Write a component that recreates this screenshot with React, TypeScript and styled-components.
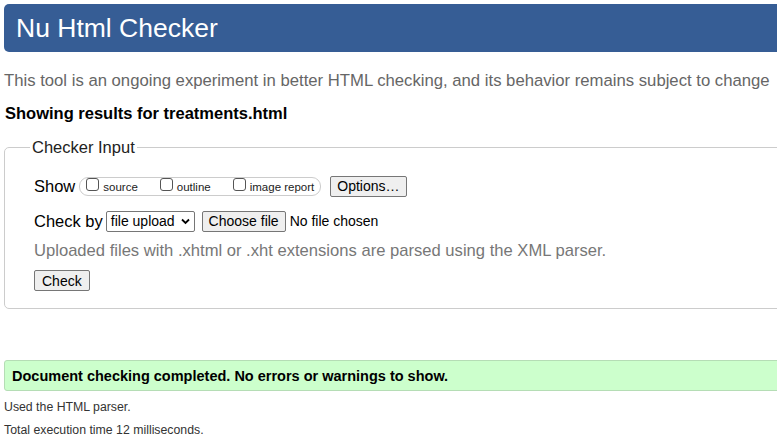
import styled, { createGlobalStyle } from 'styled-components';

const GlobalStyle = createGlobalStyle`
  html, body {
    margin: 0;
    padding: 0;
    background: #fff;
  }
  body {
    font-family: 'Liberation Sans', Arial, sans-serif;
    color: #000;
    width: 900px;
  }
`;

const StyledPage = styled.div`
  padding: 4px;
`;
const StyledHeader = styled.h1`
  margin: 0;
  height: 48px;
  display: flex;
  align-items: center;
  padding: 0 12px;
  background-color: #365d95;
  border-radius: 5px;
  color: #fff;
  font-size: 26.5px;
  font-weight: normal;
`;
const StyledIntro = styled.p`
  margin: 19px 0 0 0;
  color: #666;
  font-size: 16.7px;
  line-height: 20px;
`;
const StyledShowing = styled.h2`
  margin: 13px 0 0 1px;
  font-size: 16.5px;
  line-height: 18px;
  font-weight: bold;
`;
const StyledFieldset = styled.fieldset`
  margin: 16px 0 0 0;
  padding: 17px 0 16px 29px;
  border: 1px solid #ccc;
  border-radius: 5px;
  height: 171px;
  box-sizing: border-box;
`;
const StyledLegend = styled.legend`
  margin-left: -4px;
  padding: 0 2px;
  font-size: 16.5px;
  color: #222;
`;
const StyledRow = styled.div<{ $gap: number; $after: number }>`
  display: flex;
  align-items: center;
  gap: ${({ $gap }) => $gap}px;
  height: 24px;
  margin-bottom: ${({ $after }) => $after}px;
  font-size: 16.5px;
`;
const StyledPill = styled.span`
  display: inline-flex;
  align-items: center;
  gap: 22px;
  height: 17px;
  padding: 0 6px 0 6px;
  border: 1px solid #ccc;
  border-radius: 9px;
  margin-left: -2px;
  margin-right: 3px;
`;
const StyledCheckLabel = styled.label`
  display: inline-flex;
  align-items: center;
  font-size: 11.5px;
  color: #222;
  gap: 4px;
  padding-top: 2px;
`;
const StyledBox = styled.span`
  width: 13px;
  height: 13px;
  border: 1px solid #555;
  border-radius: 3px;
  box-sizing: border-box;
  margin-top: -6px;
`;
const StyledButton = styled.button<{ $pad?: number }>`
  font-family: inherit;
  font-size: 14px;
  color: #000;
  background: #efefef;
  border: 1px solid #767676;
  border-radius: 2px;
  padding: 0 ${({ $pad }) => $pad ?? 7}px;
  height: 21px;
`;
const StyledSelect = styled.span`
  display: inline-flex;
  align-items: center;
  gap: 6px;
  height: 21px;
  box-sizing: border-box;
  padding: 0 4px 0 4px;
  border: 1px solid #767676;
  border-radius: 2px;
  font-size: 14px;
  margin-left: -4px;
`;
const StyledNoFile = styled.span`
  font-size: 14px;
  margin-left: -3px;
`;
const StyledHint = styled.p`
  margin: 0 0 10px 0;
  color: #777;
  font-size: 16.6px;
  line-height: 19px;
`;
const StyledSuccess = styled.p`
  margin: 51px 0 0 0;
  height: 31px;
  display: flex;
  align-items: center;
  padding: 0 7px;
  background-color: #ccffcc;
  border: 1px solid #b5ddb5;
  border-radius: 3px;
  box-sizing: border-box;
  font-size: 14.5px;
  font-weight: bold;
`;
const StyledDetail = styled.p`
  margin: 9px 0 0 0;
  font-size: 12.3px;
  line-height: 14px;
  color: #333;
`;

function Checkbox({ label }: { label: string }) {
  return (
    <StyledCheckLabel>
      <StyledBox />
      {label}
    </StyledCheckLabel>
  );
}

export default function App() {
  return (
    <>
      <GlobalStyle />
      <StyledPage>
        <StyledHeader>Nu Html Checker</StyledHeader>
        <StyledIntro>
          This tool is an ongoing experiment in better HTML checking, and its behavior remains subject to change
        </StyledIntro>
        <StyledShowing>Showing results for treatments.html</StyledShowing>
        <StyledFieldset>
          <StyledLegend>Checker Input</StyledLegend>
          <StyledRow $gap={6} $after={11}>
            Show
            <StyledPill>
              <Checkbox label="source" />
              <Checkbox label="outline" />
              <Checkbox label="image report" />
            </StyledPill>
            <StyledButton $pad={6}>Options…</StyledButton>
          </StyledRow>
          <StyledRow $gap={7} $after={8}>
            Check by
            <StyledSelect>
              file upload
              <svg width="9" height="7" viewBox="0 0 9 7">
                <path d="M1 1.5 L4.5 5 L8 1.5" fill="none" stroke="#000" strokeWidth="1.8" />
              </svg>
            </StyledSelect>
            <StyledButton $pad={6}>Choose file</StyledButton>
            <StyledNoFile>No file chosen</StyledNoFile>
          </StyledRow>
          <StyledHint>Uploaded files with .xhtml or .xht extensions are parsed using the XML parser.</StyledHint>
          <StyledButton>Check</StyledButton>
        </StyledFieldset>
        <StyledSuccess>Document checking completed. No errors or warnings to show.</StyledSuccess>
        <StyledDetail>Used the HTML parser.</StyledDetail>
        <StyledDetail>Total execution time 12 milliseconds.</StyledDetail>
      </StyledPage>
    </>
  );
}
